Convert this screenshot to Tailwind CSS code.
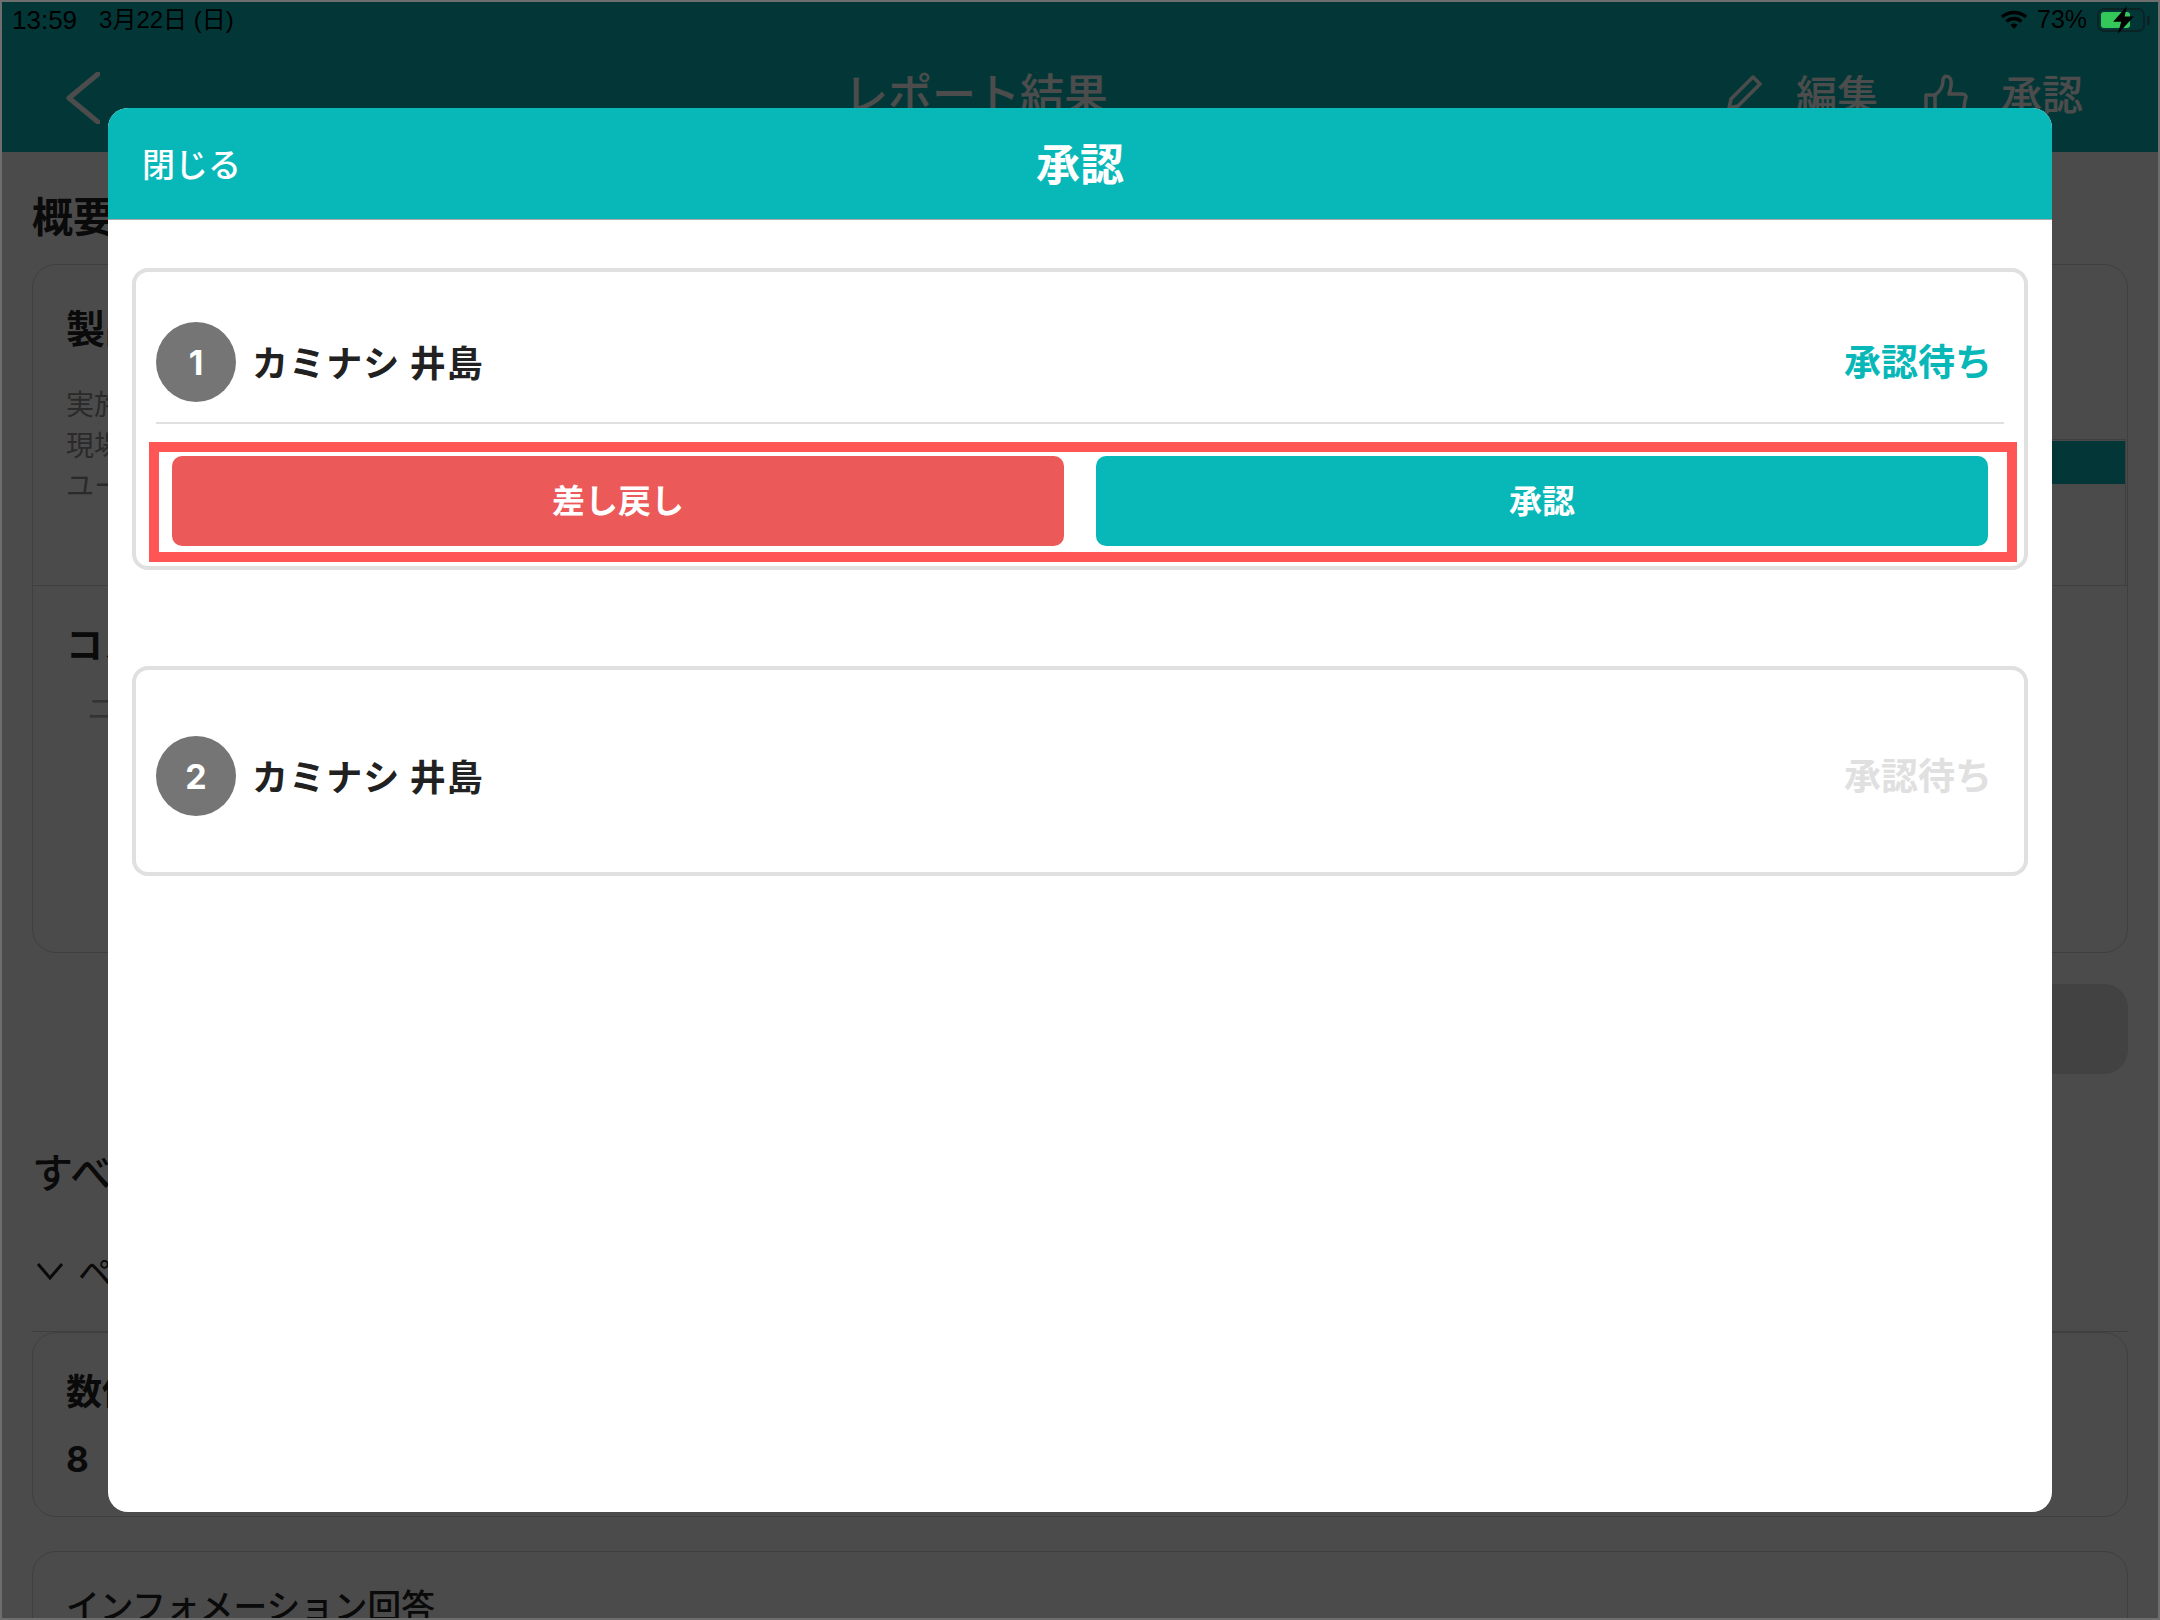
<!DOCTYPE html>
<html lang="ja">
<head>
    <meta charset="UTF-8">
    <title>レポート結果</title>
    <script src="https://cdn.jsdelivr.net/npm/@tailwindcss/browser@4"></script>
</head>
<body class="m-0">
<div class="relative w-[2160px] h-[1620px] overflow-hidden bg-[#fbfbfb] font-['Noto_Sans_CJK_JP',sans-serif]">

    <!-- report page behind the dialog -->
    <div class="h-[152px] bg-[#0abab8]">
        <div class="h-[46px]"></div>
        <div class="flex items-start pl-[66px] pr-[77px] text-white">
            <svg class="w-[34px] h-[52px] mt-[26px]" viewBox="0 0 34 52" fill="none" stroke="#fff" stroke-width="5" stroke-linecap="round" stroke-linejoin="round"><path d="M32 2 3 26l29 24"/></svg>
            <span class="ml-[744px] mt-[16px] text-[44px] leading-[60px] font-medium">レポート結果</span>
            <div class="ml-auto flex items-start mt-[16px]">
                <svg class="w-[36px] h-[36px] mt-[12px]" viewBox="0 0 36 36" fill="none" stroke="#fff" stroke-width="3.5" stroke-linejoin="round"><path d="M4 25 26 3l7 7-22 22-9 2z"/></svg>
                <span class="ml-[33px] text-[41px] leading-[60px] font-medium">編集</span>
                <svg class="ml-[46px] mt-[12px] w-[44px] h-[46px]" viewBox="0 0 44 46" fill="none" stroke="#fff" stroke-width="3.5" stroke-linejoin="round"><path d="M2 21h9v22H2zM11 21c6-4 8-9 8-15 0-5 7-5 8 1 1 5-1 9-2 13h13c4 0 5 3 3 6l-2 15c-1 2-2 3-4 3H11"/></svg>
                <span class="ml-[33px] text-[41px] leading-[60px] font-medium">承認</span>
            </div>
        </div>
    </div>

    <main class="px-[32px] pt-[32px]">
        <h2 class="text-[41px] leading-[60px] font-bold text-[#222]">概要</h2>
        <section class="mt-[20px] h-[689px] rounded-[24px] border border-[#d4d4d4]">
            <div class="h-[321px] flex border-b border-[#d4d4d4] pl-[33px] pr-[1px]">
                <div class="flex-1 pt-[34px]">
                    <h3 class="text-[39px] leading-[54px] font-bold text-[#222]">製品検査</h3>
                    <div class="mt-[30px] text-[28px] leading-[40.500px] text-[#8c8c8c]">
                        <p>実施日</p>
                        <p>現場名</p>
                        <p>ユーザー</p>
                    </div>
                </div>
                <div class="w-[1000px] mt-[174px] border-t border-r border-[#d4d4d4]">
                    <div class="h-[43px] bg-[#0abab8] mt-[1px]"></div>
                </div>
            </div>
            <div class="pl-[33px] pt-[30px]">
                <h3 class="text-[37px] leading-[54px] font-bold text-[#222]">コメント</h3>
                <p class="mt-[14px] ml-[21px] text-[30px] leading-[44px] text-[#aaa]">ニ</p>
            </div>
        </section>
        <div class="mt-[31px] ml-auto w-[1000px] h-[90px] rounded-[24px] bg-[#dcdcdc]"></div>

        <h2 class="mt-[66px] text-[41px] leading-[60px] font-medium text-[#222]">すべての回答</h2>
        <div class="mt-[46px] flex items-center gap-[14px] border-b border-[#d4d4d4] pb-[35px] text-[34px] leading-[50px] text-[#222]">
            <svg class="ml-[4px] w-[28px] h-[18px]" viewBox="0 0 28 18" fill="none" stroke="#222" stroke-width="3"><path d="M2 2l12 14L26 2"/></svg>
            <span>ページ1</span>
        </div>
        <section class="h-[185px] rounded-[24px] border border-[#d4d4d4] pl-[33px] pt-[31px]">
            <h3 class="text-[36px] leading-[50px] font-bold text-[#222]">数値</h3>
            <p class="mt-[20px] font-['Inter',sans-serif] text-[35px] leading-[50px] font-bold text-[#222]">8</p>
        </section>
        <section class="mt-[34px] h-[185px] rounded-[24px] border border-[#d4d4d4] pl-[33px] pt-[28px]">
            <h3 class="text-[33.700px] leading-[50px] font-medium text-[#222]">インフォメーション回答</h3>
        </section>
    </main>

    <!-- dim layer -->
    <div class="absolute inset-0 bg-black/70"></div>

    <!-- status bar -->
    <div class="absolute left-0 top-0 w-full h-[40px] flex items-center pl-[12px] pr-[10px] text-[26px] text-black font-['Liberation_Sans','Noto_Sans_CJK_JP',sans-serif]">
        <span>13:59</span>
        <span class="ml-[22px] text-[24px]">3月22日 (日)</span>
        <div class="ml-auto flex items-center">
            <svg class="w-[28px] h-[20px]" viewBox="0 0 28 20" fill="none" stroke="#000" stroke-width="3.4"><path d="M2 7c7-6 17-6 24 0M6.500 11.500c4.500-4 10.500-4 15 0"/><path d="M10.500 15c2-2 5-2 7 0l-3.500 4z" fill="#000" stroke="none"/></svg>
            <span class="ml-[9px] w-[50px] text-[25px]">73%</span>
            <div class="relative ml-[10px] w-[48px] h-[24px] rounded-[7px] border-2 border-[#0a2426] p-[2px]">
                <div class="w-[29px] h-full rounded-[3px] bg-[#34c759]"></div>
                <svg class="absolute left-[13px] -top-[4px] w-[23px] h-[28px]" viewBox="0 0 20 32" preserveAspectRatio="none"><path d="M13 0 1 18h7L5 32 19 12h-8z" fill="#000"/></svg>
            </div>
            <div class="ml-[2px] w-[3px] h-[9px] rounded-r-[2px] bg-[#0a2426]"></div>
        </div>
    </div>

    <!-- approval dialog -->
    <div class="absolute left-[108px] top-[108px] w-[1944px] h-[1404px] rounded-[20px] overflow-hidden bg-white">
        <header class="relative h-[112px] bg-[#08b8b8] border-b border-[#a8a8a8] flex items-center justify-center text-white">
            <span class="absolute left-[34px] top-[32px] text-[33px] leading-[46px] font-medium">閉じる</span>
            <h1 class="-mt-[3px] text-[44px] leading-[60px] font-bold">承認</h1>
        </header>
        <div class="px-[24px] pt-[48px]">
            <div class="h-[302px] rounded-[16px] border-4 border-[#e0e0e0]">
                <div class="flex items-center pl-[20px] pr-[32px] pt-[50px] pb-[20px]">
                    <span class="flex items-center justify-center w-[80px] h-[80px] rounded-full bg-[#757575] text-white font-['Inter',sans-serif] text-[34px] font-bold">1</span>
                    <span class="ml-[16px] -mt-[2px] text-[36px] leading-[50px] tracking-[1.100px] font-bold text-[#212121]">カミナシ 井島</span>
                    <span class="ml-auto -mt-[5px] text-[37px] leading-[50px] font-bold text-[#08b8b8]">承認待ち</span>
                </div>
                <div class="mx-[20px] h-[2px] bg-[#e0e0e0]"></div>
                <div class="mt-[18px] ml-[13px] mr-[7px] h-[120px] border-[10px] border-[#ff5555] pt-[4px] pl-[13px] pr-[19px] flex gap-[32px] text-white">
                    <button class="flex-1 h-[90px] pb-[3px] rounded-[10px] bg-[#ec5959] text-[33px] font-bold">差し戻し</button>
                    <button class="flex-1 h-[90px] pb-[3px] rounded-[10px] bg-[#08b8b8] text-[33px] font-bold">承認</button>
                </div>
            </div>
            <div class="mt-[96px] h-[210px] rounded-[16px] border-4 border-[#e0e0e0] flex items-center pl-[20px] pr-[32px] pt-[10px]">
                <span class="flex items-center justify-center w-[80px] h-[80px] rounded-full bg-[#757575] text-white font-['Inter',sans-serif] text-[34px] font-bold">2</span>
                <span class="ml-[16px] -mt-[2px] text-[36px] leading-[50px] tracking-[1.100px] font-bold text-[#212121]">カミナシ 井島</span>
                <span class="ml-auto -mt-[5px] text-[37px] leading-[50px] font-bold text-[#e0e0e0]">承認待ち</span>
            </div>
        </div>
    </div>

    <!-- frame of the capture -->
    <div class="absolute inset-0 border-2 border-[#6e6e6e]"></div>
</div>
</body>
</html>
